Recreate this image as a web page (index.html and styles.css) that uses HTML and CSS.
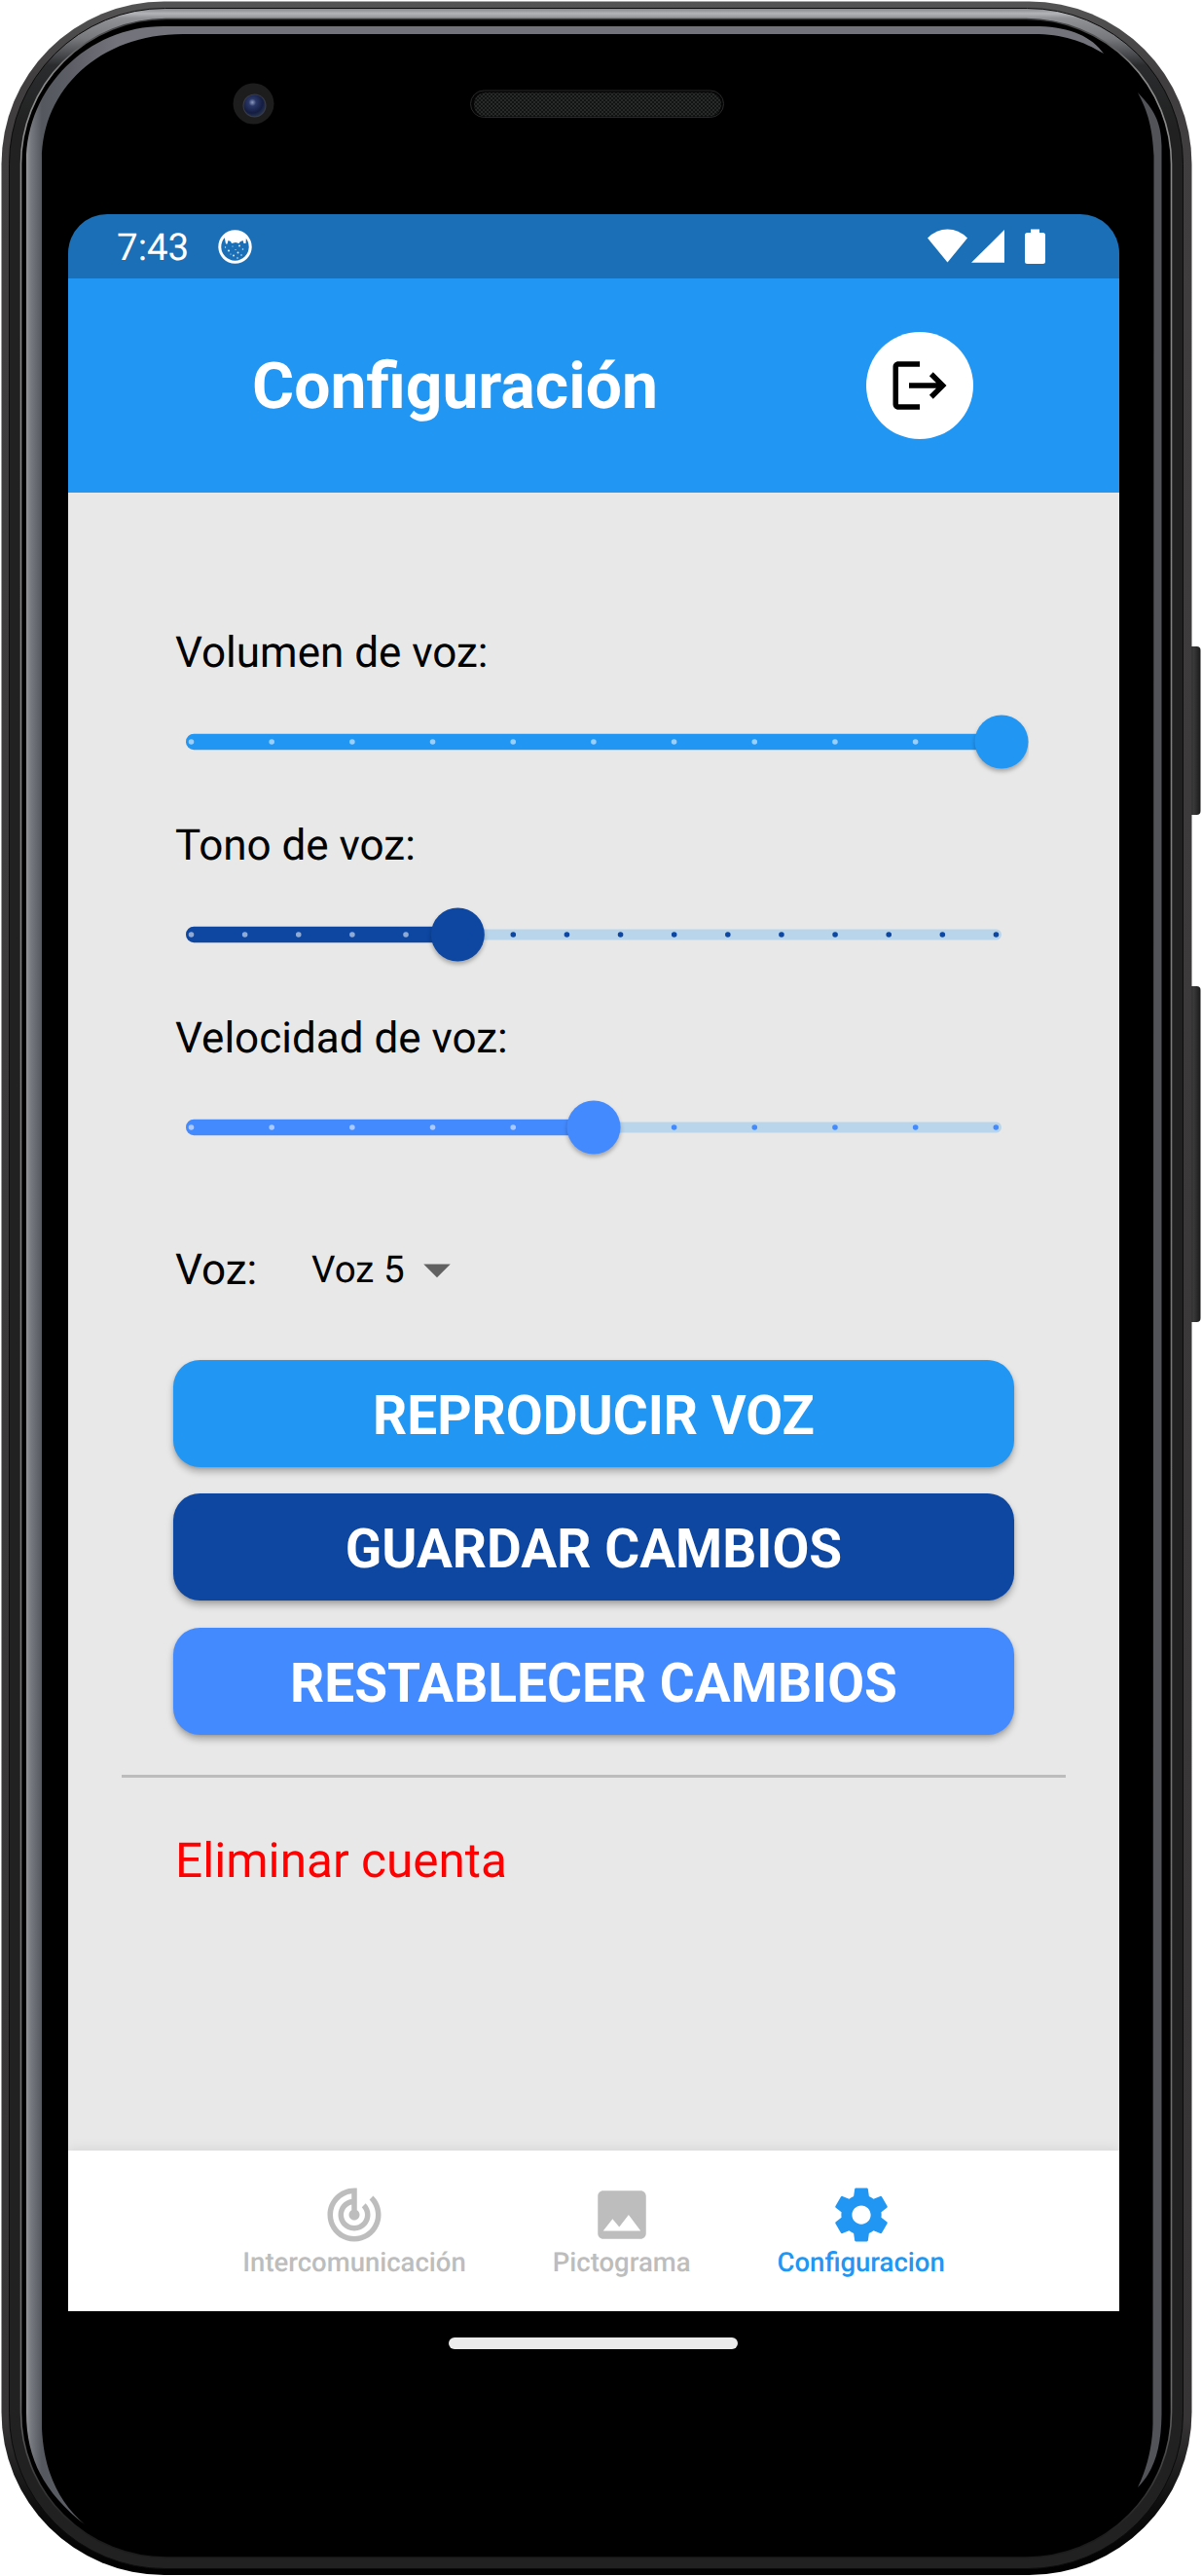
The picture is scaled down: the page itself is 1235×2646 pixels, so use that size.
FILE: index.html
```html
<!DOCTYPE html>
<html lang="es">
<head>
<meta charset="utf-8">
<title>Configuración</title>
<link rel="stylesheet" href="styles.css">
</head>
<body>
<div class="device">
  <svg class="frame" width="1235" height="2646" viewBox="0 0 1235 2646" aria-hidden="true">
    <defs>
      <linearGradient id="edge" x1="0" y1="0" x2="0" y2="1">
        <stop offset="0" stop-color="#555454"/><stop offset=".03" stop-color="#403e3e"/>
        <stop offset=".94" stop-color="#363434"/><stop offset=".975" stop-color="#0c0c0c"/><stop offset="1" stop-color="#000"/>
      </linearGradient>
      <linearGradient id="rim" gradientUnits="userSpaceOnUse" x1="0" y1="9" x2="0" y2="130">
        <stop offset="0" stop-color="#85878a"/><stop offset=".04" stop-color="#b2b4b7"/><stop offset=".08" stop-color="#8f9194"/>
        <stop offset=".25" stop-color="#77797d"/><stop offset=".48" stop-color="#2b2c2e"/><stop offset="1" stop-color="#202120"/>
      </linearGradient>
      <linearGradient id="line" gradientUnits="userSpaceOnUse" x1="0" y1="0" x2="0" y2="2646">
        <stop offset="0" stop-color="#222"/><stop offset=".03" stop-color="#8a8a8a"/>
        <stop offset=".93" stop-color="#6a6a6a"/><stop offset=".985" stop-color="#1c1c1c"/>
      </linearGradient>
      <linearGradient id="glint" gradientUnits="userSpaceOnUse" x1="27" y1="0" x2="120" y2="0">
        <stop offset="0" stop-color="#94969a"/><stop offset=".05" stop-color="#777a80"/><stop offset=".17" stop-color="#55585f"/>
        <stop offset=".5" stop-color="#5d5e66"/><stop offset="1" stop-color="#72737b"/>
      </linearGradient>
      <linearGradient id="key" x1="0" y1="0" x2="1" y2="0">
        <stop offset="0" stop-color="#0c0c0c"/><stop offset=".5" stop-color="#3a3a3a"/><stop offset="1" stop-color="#1a1a1a"/>
      </linearGradient>
      <radialGradient id="lens" cx=".4" cy=".35" r=".7">
        <stop offset="0" stop-color="#8d9bc0"/><stop offset=".25" stop-color="#2a3767"/><stop offset=".7" stop-color="#141d40"/><stop offset="1" stop-color="#2a3650"/>
      </radialGradient>
      <pattern id="mesh" width="4" height="4" patternUnits="userSpaceOnUse">
        <rect width="4" height="4" fill="#121313"/><circle cx="1" cy="1" r=".8" fill="#434545"/><circle cx="3" cy="3" r=".8" fill="#434545"/>
      </pattern>
    </defs>
    <rect x="1219" y="664" width="14.5" height="173" rx="4" fill="url(#key)"/>
    <rect x="1219" y="1013" width="14.5" height="345" rx="4" fill="url(#key)"/>
    <rect x="1.5" y="1.5" width="1223" height="2643.5" rx="167" fill="url(#edge)"/>
    <rect x="9.5" y="8.5" width="1206" height="2630" rx="160" fill="url(#rim)" stroke="#0b0b0b"/>
    <rect x="21.5" y="19.5" width="1182" height="2607.5" rx="149" fill="#000" stroke="url(#line)" stroke-width="1.6"/>
    <path fill="url(#glint)" d="M87 2593C47 2562 27 2527 27 2478V166C27 90 90 27 168 27H1068C1100 28 1122 38 1134 55C1112 42 1092 35 1062 35H188C102 35 43 92 43 164V2494C45 2538 60 2570 87 2593Z"/>
    <path fill="#515358" d="M1169 95C1185 112 1193 124 1193.500 150V2480C1193 2515 1186 2538 1169 2555C1180 2532 1184 2510 1184.500 2490L1185.500 160C1184 132 1180 116 1169 95Z"/>
    <circle cx="260.500" cy="106.500" r="21" fill="#1d1d1e"/>
    <circle cx="261.500" cy="108.500" r="12" fill="#3a3c42"/>
    <circle cx="261.500" cy="108.500" r="11" fill="url(#lens)"/>
    <rect x="483.500" y="93" width="260" height="27.500" rx="13.700" fill="#050505" stroke="#29292b"/>
    <rect x="487" y="95" width="254" height="24.500" rx="12" fill="url(#mesh)"/>
  </svg>

  <div class="screen">
    <div class="status">
      <span class="clock">7:43</span>
      <svg class="notice" width="35" height="35" viewBox="0 0 35 35"><circle cx="17.500" cy="17.500" r="15.700" fill="none" stroke="#fff" stroke-width="3"/><path fill="#fff" d="M6.500 7C10 3 14 2 17.500 2S26 3 29 7.500L28.500 14H26.500L25.500 11L22.500 12.500L21.500 14L18 13L14 14L13 12L10.500 11L9.500 14.500H8Z"/><g fill="#d7e9f8"><circle cx="11" cy="21.500" r="1.100"/><circle cx="22" cy="16.500" r="1"/><circle cx="20.500" cy="23.500" r="1"/><circle cx="15" cy="17" r=".6"/><circle cx="25.500" cy="20" r=".8"/><circle cx="16" cy="26.500" r="1"/><circle cx="7.500" cy="18" r=".7"/><circle cx="24" cy="26" r=".8"/><circle cx="18" cy="20.500" r=".6"/><circle cx="20" cy="29" r=".8"/><circle cx="13" cy="25" r=".6"/></g></svg>
      <svg class="signals" width="121" height="37" viewBox="0 0 121 37" fill="#fff"><path d="M0 9.500Q9 .5 20.500 .5T41 9.500L20.500 34.500Z"/><path d="M45 34.800L79 1V34.800Z"/><path d="M106 .5h9v3.500h3.500a2.500 2.500 0 0 1 2.500 2.500v27a2.500 2.500 0 0 1-2.500 2.500h-16a2.500 2.500 0 0 1-2.500-2.500v-27a2.500 2.500 0 0 1 2.500-2.500h3.500z"/></svg>
    </div>

    <header class="header">
      <h1>Configuración</h1>
      <button class="logout" aria-label="Salir"><svg width="66" height="66" viewBox="0 0 24 24"><path d="M17 7l-1.410 1.410L18.170 11H8v2h10.170l-2.580 2.580L17 17l5-5zM4 5h8V3H4c-1.100 0-2 .9-2 2v14c0 1.100.9 2 2 2h8v-2H4V5z"/></svg></button>
    </header>

    <main class="settings">
      <section class="control">
        <label>Volumen de voz:</label>
        <svg class="slider volume" width="894" height="118" viewBox="0 0 894 118">
          <rect class="rail" x="28" y="53.500" width="838" height="11" rx="5.500"/>
          <rect class="fill" x="28" y="50.700" width="838" height="16.500" rx="8.250"/>
          <path class="tick on" d="M33.500 59h746" stroke-dasharray="0 82.680"/>
          <circle class="thumb" cx="866" cy="59" r="27.500"/>
        </svg>
      </section>
      <section class="control">
        <label>Tono de voz:</label>
        <svg class="slider tone" width="894" height="118" viewBox="0 0 894 118">
          <rect class="rail" x="28" y="53.500" width="838" height="11" rx="5.500"/>
          <rect class="fill" x="28" y="50.700" width="288" height="16.500" rx="8.250"/>
          <path class="tick on" d="M33.500 59h221" stroke-dasharray="0 55.130"/>
          <path class="tick" d="M364.300 59h497" stroke-dasharray="0 55.130"/>
          <circle class="thumb" cx="307.300" cy="59" r="27.500"/>
        </svg>
      </section>
      <section class="control">
        <label>Velocidad de voz:</label>
        <svg class="slider speed" width="894" height="118" viewBox="0 0 894 118">
          <rect class="rail" x="28" y="53.500" width="838" height="11" rx="5.500"/>
          <rect class="fill" x="28" y="50.700" width="427" height="16.500" rx="8.250"/>
          <path class="tick on" d="M33.500 59h331.500" stroke-dasharray="0 82.680"/>
          <path class="tick" d="M529.600 59h332" stroke-dasharray="0 82.680"/>
          <circle class="thumb" cx="447" cy="59" r="27.500"/>
        </svg>
      </section>

      <div class="voice">
        <span class="voice-label">Voz:</span>
        <span class="voice-value">Voz 5</span>
        <svg width="66" height="66" viewBox="0 0 24 24" fill="#616161"><path d="M7 10l5 5 5-5z"/></svg>
      </div>

      <div class="actions">
        <button class="play">REPRODUCIR VOZ</button>
        <button class="save">GUARDAR CAMBIOS</button>
        <button class="reset">RESTABLECER CAMBIOS</button>
      </div>
      <div class="divider"></div>
      <a class="delete">Eliminar cuenta</a>
    </main>

    <nav class="tabs">
      <a class="tab"><svg width="66" height="66" viewBox="0 0 24 24"><path d="M19.070 4.930l-1.410 1.410C19.100 7.790 20 9.790 20 12c0 4.420-3.580 8-8 8s-8-3.580-8-8c0-4.080 3.050-7.440 7-7.930v2.020C8.160 6.570 6 9.030 6 12c0 3.310 2.690 6 6 6s6-2.690 6-6c0-1.660-.67-3.160-1.760-4.240l-1.410 1.410C15.550 9.900 16 10.900 16 12c0 2.210-1.790 4-4 4s-4-1.790-4-4c0-1.860 1.280-3.410 3-3.860v2.140c-.6.350-1 .98-1 1.720 0 1.100.9 2 2 2s2-.9 2-2c0-.74-.4-1.380-1-1.720V2h-1C6.480 2 2 6.480 2 12s4.480 10 10 10 10-4.480 10-10c0-2.760-1.120-5.260-2.930-7.070z"/></svg><span>Intercomunicación</span></a>
      <a class="tab"><svg width="66" height="66" viewBox="0 0 24 24"><path d="M21 19V5c0-1.100-.9-2-2-2H5c-1.100 0-2 .9-2 2v14c0 1.100.9 2 2 2h14c1.100 0 2-.9 2-2zM8.500 13.500l2.500 3.010L14.500 12l4.500 6H5l3.500-4.500z"/></svg><span>Pictograma</span></a>
      <a class="tab active"><svg width="66" height="66" viewBox="0 0 24 24"><path d="M19.430 12.980c.04-.32.070-.64.070-.98s-.03-.66-.07-.98l2.110-1.650c.19-.15.240-.42.120-.64l-2-3.460c-.12-.22-.39-.3-.61-.22l-2.490 1c-.52-.4-1.080-.73-1.690-.98l-.38-2.650C14.460 2.180 14.250 2 14 2h-4c-.25 0-.46.180-.49.420l-.38 2.650c-.61.250-1.170.59-1.690.98l-2.490-1c-.23-.09-.49 0-.61.220l-2 3.460c-.13.220-.07.490.12.640l2.110 1.650c-.04.320-.07.650-.07.980s.03.660.07.980l-2.110 1.650c-.19.150-.24.420-.12.640l2 3.460c.12.220.39.300.61.220l2.490-1c.52.400 1.080.730 1.690.98l.38 2.650c.03.240.24.420.49.420h4c.25 0 .46-.18.490-.42l.38-2.650c.61-.25 1.170-.59 1.690-.98l2.490 1c.23.090.49 0 .61-.22l2-3.460c.12-.22.070-.49-.12-.64l-2.110-1.650zM12 15.500c-1.930 0-3.500-1.570-3.500-3.500s1.570-3.500 3.500-3.500 3.500 1.570 3.500 3.500-1.570 3.500-3.500 3.500z"/></svg><span>Configuracion</span></a>
    </nav>
    <div class="gesture"><span></span></div>
  </div>
</div>
</body>
</html>
```

FILE: styles.css
```css
* { box-sizing: border-box; }
body {
  margin: 0;
  width: 1235px;
  height: 2646px;
  background: #fff;
  font-family: Roboto, "Liberation Sans", sans-serif;
  text-rendering: geometricPrecision;
  overflow: hidden;
}
svg { display: block; flex: none; }
button { border: 0; padding: 0; font: inherit; }

/* The frame drawing and the screen share one grid cell */
.device { display: grid; width: 1235px; height: 2646px; }
.frame, .screen { grid-area: 1 / 1; }
.screen {
  width: 1080px;
  height: 2220px;
  margin: 220px 0 0 70px;
  border-radius: 40px 40px 0 0;
  overflow: hidden;
  background: #000;
  display: flex;
  flex-direction: column;
}

.status {
  height: 66px;
  flex: none;
  background: #1a6fb6;
  color: #fff;
  display: flex;
  align-items: center;
  padding: 0 76px 0 50px;
}
.clock { width: 76px; padding-top: 4px; font-size: 38.5px; line-height: 66px; white-space: nowrap; }
.notice { margin-left: 28px; }
.signals { margin-left: auto; }

.header {
  height: 220px;
  flex: none;
  background: #2196f3;
  display: flex;
  align-items: center;
  justify-content: space-between;
  padding: 0 145px 0 189px;
}
h1 { margin: 0; padding-top: 3px; color: #fff; font-size: 66px; font-weight: 700; line-height: 80px; }
.logout {
  width: 110px;
  height: 110px;
  border-radius: 50%;
  margin-right: 5px;
  background: #fff;
  display: flex;
  align-items: center;
  justify-content: center;
}

.settings {
  height: 1703px;
  flex: none;
  background: #e8e8e8;
  padding: 131px 55px 0;
}
.control { height: 198px; padding-left: 38px; }
.control label {
  display: block;
  margin-left: 17px;
  height: 66px;
  line-height: 66px;
  font-size: 44px;
}
.rail { fill: #b9d5eb; }
.fill, .thumb { fill: var(--accent); }
.thumb { filter: drop-shadow(0 3px 2px rgba(0, 0, 0, .28)); }
.tick { stroke: var(--accent); stroke-width: 5.6; stroke-linecap: round; }
.tick.on { stroke: rgba(255, 255, 255, .54); }
.volume { --accent: #2196f3; }
.tone { --accent: #0d47a1; }
.speed { --accent: #448aff; }

.voice { height: 132px; margin-top: 7px; padding-left: 55px; display: flex; align-items: center; }
.voice-label { width: 140px; font-size: 44px; }
.voice-value { width: 98px; font-size: 38.5px; white-space: nowrap; }
.voice svg { margin: 0 0 0 -2px; }

.actions { display: flex; flex-direction: column; gap: 27.5px; margin: 26.8px 53px 0; }
.actions button {
  height: 110px;
  border-radius: 27.5px;
  color: #fff;
  font-size: 55px;
  font-weight: 700;
  line-height: 114px;
  box-shadow: 0 5px 7px rgba(0, 0, 0, .26), 0 1px 3px rgba(0, 0, 0, .12);
}
.play { background: #2196f3; }
.save { background: #0d47a1; }
.reset { background: #448aff; }
.divider { height: 3px; margin-top: 41px; background: #bcbcbc; }
.delete { display: block; margin: 55px 0 0 55px; line-height: 62px; font-size: 49.5px; color: #f00; }

.tabs {
  height: 165px;
  flex: none;
  background: #fff;
  box-shadow: 0 -2px 12px rgba(0, 0, 0, .08);
  display: flex;
  justify-content: center;
  gap: 89px;
  padding-top: 33px;
}
.tab { display: flex; flex-direction: column; align-items: center; color: #bdbdbd; fill: currentColor; }
.tab span { font-size: 27.5px; font-weight: 500; line-height: 32px; }
.tab.active { color: #2196f3; }

.gesture { flex: 1; display: flex; align-items: center; justify-content: center; padding-right: 2px; }
.gesture span { width: 297px; height: 12px; border-radius: 6px; background: #ebebeb; }
```
